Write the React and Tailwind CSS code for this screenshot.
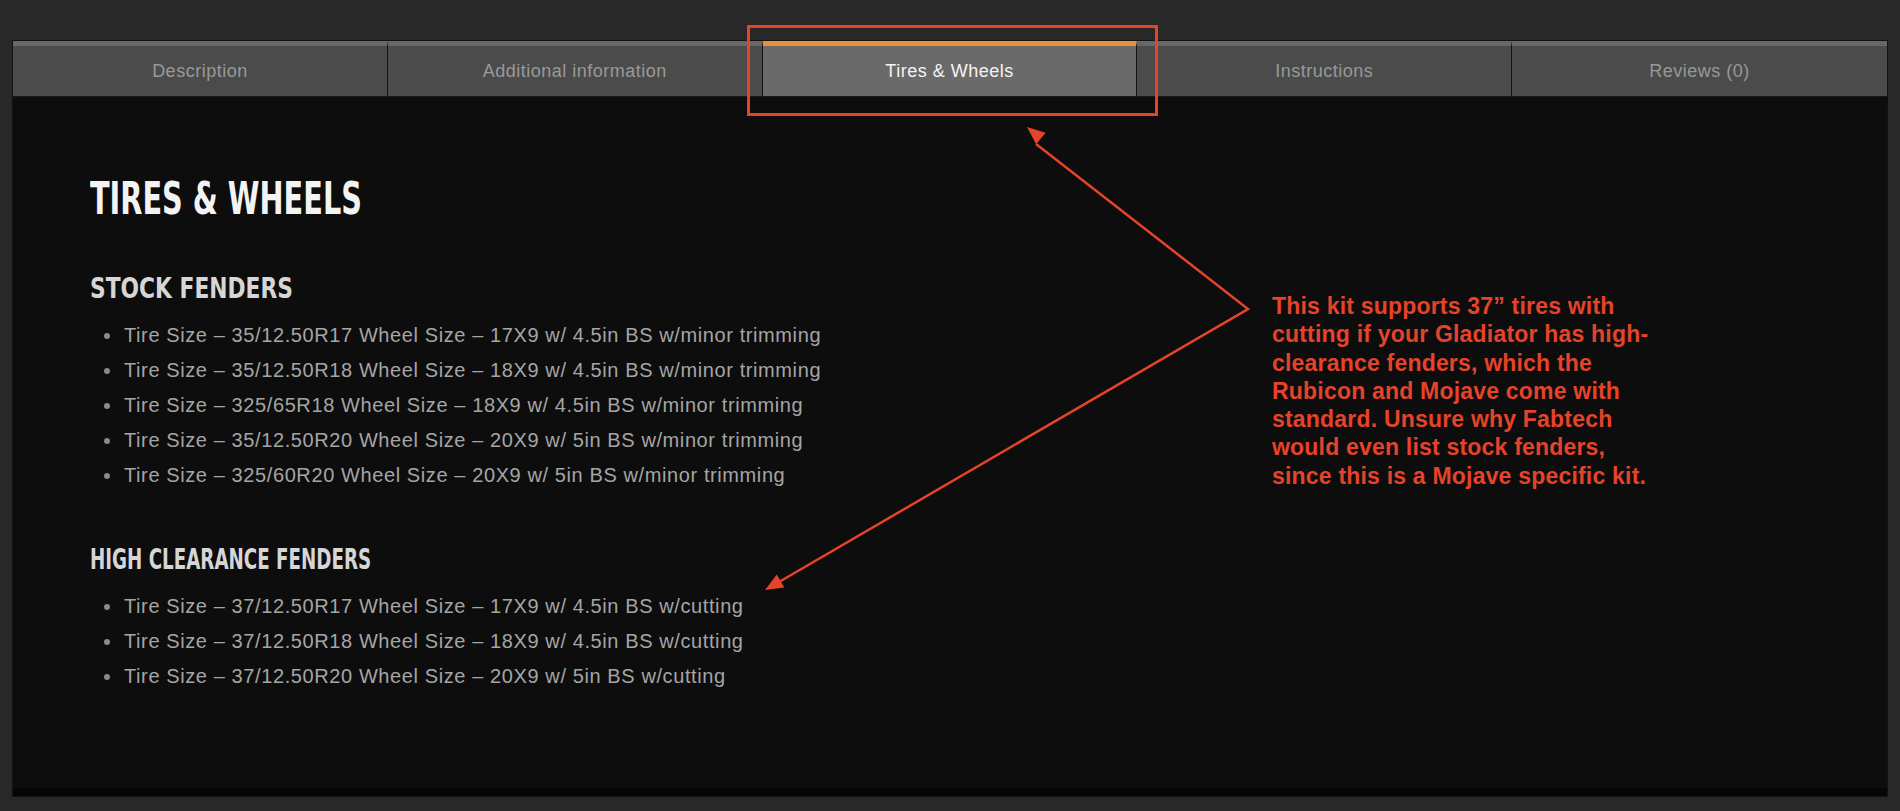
import React from 'react';

const tabs = ['Description', 'Additional information', 'Tires & Wheels', 'Instructions', 'Reviews (0)'];

const stock = [
  'Tire Size – 35/12.50R17 Wheel Size – 17X9 w/ 4.5in BS w/minor trimming',
  'Tire Size – 35/12.50R18 Wheel Size – 18X9 w/ 4.5in BS w/minor trimming',
  'Tire Size – 325/65R18 Wheel Size – 18X9 w/ 4.5in BS w/minor trimming',
  'Tire Size – 35/12.50R20 Wheel Size – 20X9 w/ 5in BS w/minor trimming',
  'Tire Size – 325/60R20 Wheel Size – 20X9 w/ 5in BS w/minor trimming',
];

const high = [
  'Tire Size – 37/12.50R17 Wheel Size – 17X9 w/ 4.5in BS w/cutting',
  'Tire Size – 37/12.50R18 Wheel Size – 18X9 w/ 4.5in BS w/cutting',
  'Tire Size – 37/12.50R20 Wheel Size – 20X9 w/ 5in BS w/cutting',
];

const note = [
  'This kit supports 37” tires with',
  'cutting if your Gladiator has high-',
  'clearance fenders, which the',
  'Rubicon and Mojave come with',
  'standard. Unsure why Fabtech',
  'would even list stock fenders,',
  'since this is a Mojave specific kit.',
];

const condensed = { fontFamily: "'DejaVu Sans Condensed', 'Liberation Sans Narrow', sans-serif", fontStretch: 'condensed' };

// arrow head triangle from a start point to a tip
const head = (x1, y1, x2, y2, len = 18, half = 7.5) => {
  const dx = x2 - x1, dy = y2 - y1;
  const d = Math.hypot(dx, dy);
  const ux = dx / d, uy = dy / d;
  const bx = x2 - ux * len, by = y2 - uy * len;
  return `${x2},${y2} ${bx - uy * half},${by + ux * half} ${bx + uy * half},${by - ux * half}`;
};

const Bullets = ({ items }) => (
  <ul className="mt-[15px] pl-[33px] list-disc marker:text-[#8a8a8a]">
    {items.map((t) => (
      <li key={t} className="h-[35px] leading-[35px] pl-[1px]">{t}</li>
    ))}
  </ul>
);

export default function App() {
  const red = '#e5432a';
  return (
    <div className="relative w-full h-[811px] bg-[#282828] pt-[40px] px-[12px] overflow-hidden" style={{ fontFamily: "'Liberation Sans', Arial, sans-serif" }}>
      <div className="border border-[#121212] bg-[#0d0d0d]">
        {/* TABS */}
        <div className="grid grid-cols-5 h-[56px] divide-x divide-[#141414] border-b border-[#1c1a18]">
          {tabs.map((t, i) => (
            <div
              key={t}
              className={`flex items-center justify-center text-[18px] tracking-[0.5px] border-t-[5px] ${
                i === 2
                  ? 'bg-[#6a6a6a] border-t-[#e8913a] text-[#f4f4f4]'
                  : 'bg-[#4b4b4b] border-t-[#676767] text-[#999999]'
              }`}
            >
              {t}
            </div>
          ))}
        </div>

        {/* CONTENT */}
        <div className="h-[699px] pl-[77px] pt-[78px] text-[#a5a5a5] text-[20px] tracking-[0.6px] border-b-[8px] border-[#060606]">
          <h1
            className="text-[#f3f3f3] text-[45px] leading-[48px] h-[48px] font-bold tracking-normal origin-left scale-x-[0.71] whitespace-nowrap"
            style={condensed}
          >
            TIRES &amp; WHEELS
          </h1>
          <h2
            className="mt-[50px] text-[#d6d6d6] text-[29px] leading-[30px] h-[30px] font-bold tracking-normal origin-left scale-x-[0.835] whitespace-nowrap"
            style={condensed}
          >
            STOCK FENDERS
          </h2>
          <Bullets items={stock} />
          <h2
            className="mt-[51px] text-[#d6d6d6] text-[29px] leading-[30px] h-[30px] font-bold tracking-normal origin-left scale-x-[0.70] whitespace-nowrap"
            style={condensed}
          >
            HIGH CLEARANCE FENDERS
          </h2>
          <Bullets items={high} />
        </div>
      </div>

      {/* ANNOTATION */}
      <svg className="absolute left-0 top-0 pointer-events-none" width="1900" height="811">
        <rect x="748.5" y="26.5" width="408" height="88" fill="none" stroke={red} strokeWidth="3" />
        <polyline points="1036,144 1248,309 779,582" fill="none" stroke={red} strokeWidth="2.5" />
        <polygon points={head(1248, 309, 1027, 127)} fill={red} />
        <polygon points={head(1248, 309, 765, 590)} fill={red} />
      </svg>
      <div className="absolute left-[1272px] top-[292px] text-[23px] leading-[28.3px] tracking-[0.2px] font-bold" style={{ color: red }}>
        {note.map((l) => (
          <div key={l}>{l}</div>
        ))}
      </div>
    </div>
  );
}
